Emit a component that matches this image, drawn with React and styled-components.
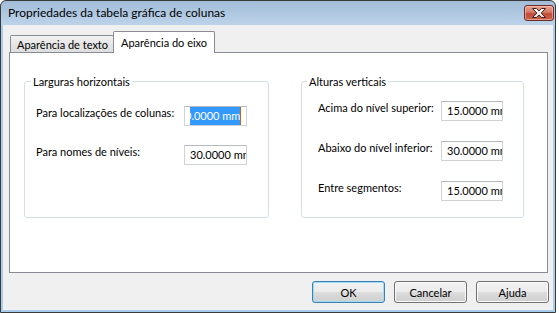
import React from 'react';
import styled, { createGlobalStyle } from 'styled-components';

const GlobalStyle = createGlobalStyle`
  html, body {
    margin: 0;
    padding: 0;
    background: #fff;
  }
  body {
    font-family: Lato, "Liberation Sans", sans-serif;
    font-size: 11px;
    color: #000;
  }
`;

const Window = styled.div`
  width: 556px;
  height: 313px;
  box-sizing: border-box;
  border: 1px solid #3a3a3a;
  border-radius: 6px 6px 0 0;
  background: linear-gradient(#a2bcd7 0, #bcd3ea 24px, #a9cdee 24px, #a9cdee 100%);
  display: flex;
  flex-direction: column;
  overflow: hidden;
`;

const TitleBar = styled.div`
  height: 24px;
  display: flex;
  align-items: flex-start;
  padding-left: 7px;
`;

const Title = styled.span`
  font-size: 12px;
  line-height: 24px;
  color: #000;
`;

const CloseButton = styled.div`
  margin: 4px 1px 0 auto;
  width: 30px;
  height: 16px;
  box-sizing: border-box;
  border: 1px solid #6b2c24;
  border-radius: 3px;
  background: linear-gradient(#e8a493 0%, #d47866 45%, #c24c38 55%, #c9624c 100%);
  box-shadow: inset 0 0 0 1px rgba(255, 210, 200, 0.5);
  display: flex;
  align-items: center;
  justify-content: center;
`;

const Client = styled.div`
  flex: 1;
  margin: 0 2px 2px;
  background: #f0f0f0;
  display: flex;
  flex-direction: column;
  padding: 0 5px 0 6px;
`;

const TabStrip = styled.div`
  height: 27px;
  display: flex;
  align-items: flex-end;
  padding-left: 1px;
`;

const Tab = styled.div`
  position: relative;
  z-index: ${(p) => (p.$active ? 2 : 1)};
  box-sizing: border-box;
  width: ${(p) => p.$width}px;
  height: ${(p) => (p.$active ? 22 : 17)}px;
  margin-bottom: ${(p) => (p.$active ? -1 : 0)}px;
  margin-left: ${(p) => (p.$active ? -1 : 0)}px;
  border: 1px solid #898c95;
  border-bottom: none;
  border-radius: 2px 2px 0 0;
  background: ${(p) => (p.$active ? '#fff' : 'linear-gradient(#f3f3f3, #e6e6e6 50%, #dedede)')};
  display: flex;
  align-items: center;
  padding-left: ${(p) => (p.$active ? 7 : 6)}px;
  white-space: nowrap;
`;

const Panel = styled.div`
  height: 221px;
  box-sizing: border-box;
  border: 1px solid #898c95;
  background: #fff;
  display: flex;
  align-items: flex-start;
  gap: 32px;
  padding: 22px 0 0 14px;
`;

const Group = styled.fieldset`
  margin: 0;
  width: ${(p) => p.$width}px;
  height: 143px;
  box-sizing: border-box;
  min-width: 0;
  border: 1px solid #d5dfe5;
  border-radius: 3px;
  padding: 0;
`;

const Legend = styled.legend`
  margin-left: ${(p) => p.$offset}px;
  padding: 0 2px;
  line-height: 13px;
`;

const Rows = styled.div`
  display: grid;
  grid-template-columns: ${(p) => p.$label}px ${(p) => p.$field}px;
  row-gap: ${(p) => p.$gap}px;
  padding: ${(p) => p.$top}px 0 0 ${(p) => p.$inset}px;
`;

const Label = styled.div`
  line-height: 14px;
  white-space: nowrap;
`;

const Field = styled.div`
  height: 20px;
  box-sizing: border-box;
  border: 1px solid #cfd3d8;
  border-top-color: #b5b9c0;
  background: #fff;
  padding-left: 5px;
  line-height: 18px;
  overflow: hidden;
  white-space: nowrap;
  display: flex;
`;

const Selection = styled.span`
  display: inline-block;
  overflow: hidden;
  background: #3399ff;
  color: #fff;
  border-right: 1px solid #cc6600;
`;

const Scrolled = styled.span`
  display: inline-block;
  margin-left: -5px;
`;

const ButtonRow = styled.div`
  display: flex;
  justify-content: flex-end;
  gap: 9px;
  margin: 8px -1px 0 0;
`;

const Button = styled.div`
  width: 73px;
  height: 22px;
  box-sizing: border-box;
  border: 1px solid ${(p) => (p.$default ? '#3c7fb1' : '#707070')};
  border-radius: 3px;
  background: linear-gradient(#f2f2f2 0%, #ebebeb 50%, #dddddd 50%, #cfcfcf 100%);
  box-shadow: inset 0 0 0 1px ${(p) => (p.$default ? '#9fdcf6' : '#fbfbfb')};
  display: flex;
  align-items: center;
  justify-content: center;
`;

const CloseGlyph = () => (
  <svg width="14" height="10" viewBox="0 0 14 10">
    <defs>
      <linearGradient id="xg" x1="0" y1="0" x2="0" y2="1">
        <stop offset="0" stopColor="#ffffff" />
        <stop offset="1" stopColor="#dcdcdc" />
      </linearGradient>
    </defs>
    <polygon
      points="0.5,0.5 4.5,0.5 7,3 9.5,0.5 13.5,0.5 9.2,5 13.5,9.5 9.5,9.5 7,7 4.5,9.5 0.5,9.5 4.8,5"
      fill="url(#xg)"
      stroke="#4b1f19"
      strokeWidth="1"
      strokeLinejoin="round"
    />
  </svg>
);

const left = [
  { label: 'Para localizações de colunas:', value: '0.0000 mm', selected: true },
  { label: 'Para nomes de níveis:', value: '30.0000 mm' },
];

const right = [
  { label: 'Acima do nível superior:', value: '15.0000 mm' },
  { label: 'Abaixo do nível inferior:', value: '30.0000 mm' },
  { label: 'Entre segmentos:', value: '15.0000 mm' },
];

const renderRows = (rows) =>
  rows.map((r) => (
    <React.Fragment key={r.label}>
      <Label>{r.label}</Label>
      <Field>
        {r.selected ? (
          <Selection>
            <Scrolled>{r.value}</Scrolled>
          </Selection>
        ) : (
          r.value
        )}
      </Field>
    </React.Fragment>
  ));

export default function App() {
  return (
    <>
      <GlobalStyle />
      <Window>
        <TitleBar>
          <Title>Propriedades da tabela gráfica de colunas</Title>
          <CloseButton>
            <CloseGlyph />
          </CloseButton>
        </TitleBar>
        <Client>
          <TabStrip>
            <Tab $width={104}>Aparência de texto</Tab>
            <Tab $active $width={102}>Aparência do eixo</Tab>
          </TabStrip>
          <Panel>
            <Group $width={245}>
              <Legend $offset={6}>Larguras horizontais</Legend>
              <Rows $label={148} $field={63} $gap={19} $top={18} $inset={11}>
                {renderRows(left)}
              </Rows>
            </Group>
            <Group $width={223}>
              <Legend $offset={5}>Alturas verticais</Legend>
              <Rows $label={123} $field={62} $gap={20} $top={13} $inset={16}>
                {renderRows(right)}
              </Rows>
            </Group>
          </Panel>
          <ButtonRow>
            <Button $default>OK</Button>
            <Button>Cancelar</Button>
            <Button>Ajuda</Button>
          </ButtonRow>
        </Client>
      </Window>
    </>
  );
}
